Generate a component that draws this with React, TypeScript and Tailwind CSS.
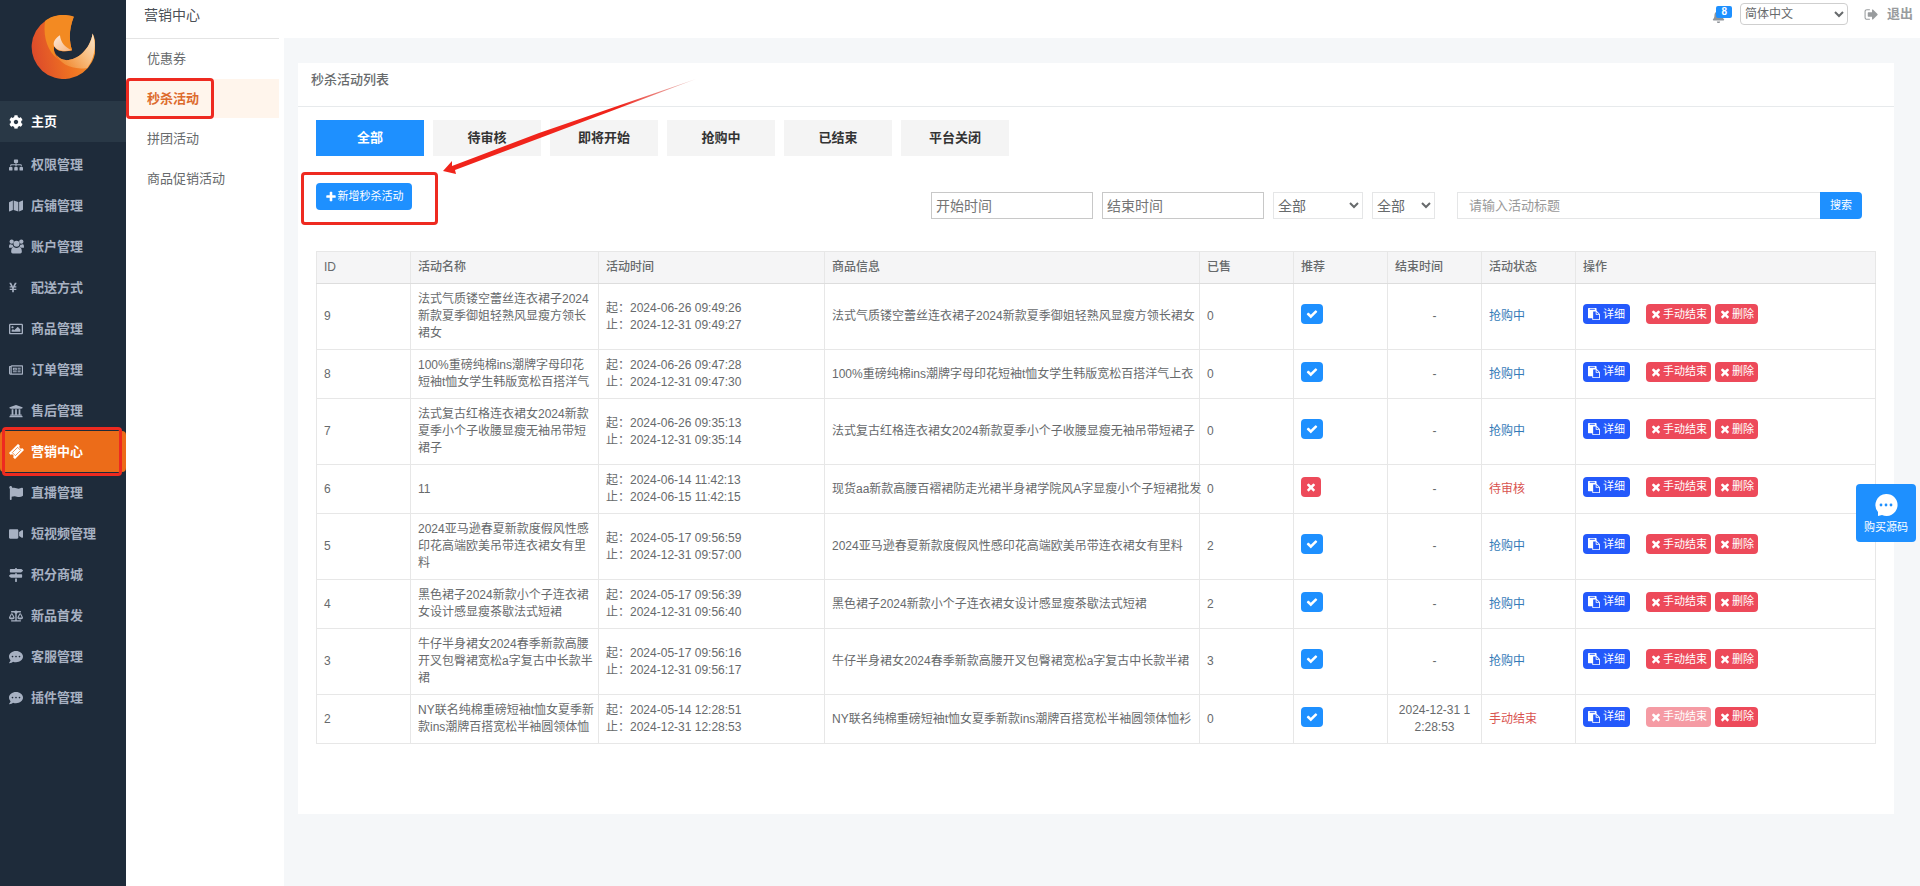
import type { ReactNode } from 'react';
import clsx from 'clsx';
import {
  FaBalanceScale,
  FaBell,
  FaCog,
  FaCommentDots,
  FaFlag,
  FaMap,
  FaMapSigns,
  FaRegImage,
  FaRegNewspaper,
  FaSitemap,
  FaUniversity,
  FaVideo,
  FaYenSign,
} from 'react-icons/fa';

const menu = [
  { label: '主页', icon: <FaCog /> },
  { label: '权限管理', icon: <FaSitemap /> },
  { label: '店铺管理', icon: <FaMap /> },
  { label: '账户管理', icon: <UsersIcon /> },
  { label: '配送方式', icon: <FaYenSign className="h-[11px] w-2" /> },
  { label: '商品管理', icon: <FaRegImage /> },
  { label: '订单管理', icon: <FaRegNewspaper /> },
  { label: '售后管理', icon: <FaUniversity /> },
  { label: '营销中心', icon: <TicketIcon /> },
  { label: '直播管理', icon: <FaFlag /> },
  { label: '短视频管理', icon: <FaVideo /> },
  { label: '积分商城', icon: <FaMapSigns /> },
  { label: '新品首发', icon: <FaBalanceScale /> },
  { label: '客服管理', icon: <FaCommentDots /> },
  { label: '插件管理', icon: <FaCommentDots /> },
];

const subMenu = ['优惠券', '秒杀活动', '拼团活动', '商品促销活动'];

const tabs = ['全部', '待审核', '即将开始', '抢购中', '已结束', '平台关闭'];

const columns = [
  { label: 'ID', width: 'w-[94px]' },
  { label: '活动名称', width: 'w-[188px]' },
  { label: '活动时间', width: 'w-[226px]' },
  { label: '商品信息', width: 'w-[375px]' },
  { label: '已售', width: 'w-[94px]' },
  { label: '推荐', width: 'w-[94px]' },
  { label: '结束时间', width: 'w-[94px]' },
  { label: '活动状态', width: 'w-[94px]' },
  { label: '操作', width: '' },
];

interface Activity {
  id: number;
  name: string;
  start: string;
  end: string;
  product: string;
  sold: number;
  recommended: boolean;
  endedAt: string;
  status: string;
}

const activities: Activity[] = [
  {
    id: 9,
    name: '法式气质镂空蕾丝连衣裙子2024\n新款夏季御姐轻熟风显瘦方领长\n裙女',
    start: '2024-06-26 09:49:26',
    end: '2024-12-31 09:49:27',
    product: '法式气质镂空蕾丝连衣裙子2024新款夏季御姐轻熟风显瘦方领长裙女',
    sold: 0,
    recommended: true,
    endedAt: '-',
    status: '抢购中',
  },
  {
    id: 8,
    name: '100%重磅纯棉ins潮牌字母印花\n短袖t恤女学生韩版宽松百搭洋气',
    start: '2024-06-26 09:47:28',
    end: '2024-12-31 09:47:30',
    product: '100%重磅纯棉ins潮牌字母印花短袖t恤女学生韩版宽松百搭洋气上衣',
    sold: 0,
    recommended: true,
    endedAt: '-',
    status: '抢购中',
  },
  {
    id: 7,
    name: '法式复古红格连衣裙女2024新款\n夏季小个子收腰显瘦无袖吊带短\n裙子',
    start: '2024-06-26 09:35:13',
    end: '2024-12-31 09:35:14',
    product: '法式复古红格连衣裙女2024新款夏季小个子收腰显瘦无袖吊带短裙子',
    sold: 0,
    recommended: true,
    endedAt: '-',
    status: '抢购中',
  },
  {
    id: 6,
    name: '11',
    start: '2024-06-14 11:42:13',
    end: '2024-06-15 11:42:15',
    product: '现货aa新款高腰百褶裙防走光裙半身裙学院风A字显瘦小个子短裙批发',
    sold: 0,
    recommended: false,
    endedAt: '-',
    status: '待审核',
  },
  {
    id: 5,
    name: '2024亚马逊春夏新款度假风性感\n印花高端欧美吊带连衣裙女有里\n料',
    start: '2024-05-17 09:56:59',
    end: '2024-12-31 09:57:00',
    product: '2024亚马逊春夏新款度假风性感印花高端欧美吊带连衣裙女有里料',
    sold: 2,
    recommended: true,
    endedAt: '-',
    status: '抢购中',
  },
  {
    id: 4,
    name: '黑色裙子2024新款小个子连衣裙\n女设计感显瘦茶歇法式短裙',
    start: '2024-05-17 09:56:39',
    end: '2024-12-31 09:56:40',
    product: '黑色裙子2024新款小个子连衣裙女设计感显瘦茶歇法式短裙',
    sold: 2,
    recommended: true,
    endedAt: '-',
    status: '抢购中',
  },
  {
    id: 3,
    name: '牛仔半身裙女2024春季新款高腰\n开叉包臀裙宽松a字复古中长款半\n裙',
    start: '2024-05-17 09:56:16',
    end: '2024-12-31 09:56:17',
    product: '牛仔半身裙女2024春季新款高腰开叉包臀裙宽松a字复古中长款半裙',
    sold: 3,
    recommended: true,
    endedAt: '-',
    status: '抢购中',
  },
  {
    id: 2,
    name: 'NY联名纯棉重磅短袖t恤女夏季新\n款ins潮牌百搭宽松半袖圆领体恤',
    start: '2024-05-14 12:28:51',
    end: '2024-12-31 12:28:53',
    product: 'NY联名纯棉重磅短袖t恤女夏季新款ins潮牌百搭宽松半袖圆领体恤衫',
    sold: 0,
    recommended: true,
    endedAt: '2024-12-31 1\n2:28:53',
    status: '手动结束',
  },
];

const iconPaths = {
  times:
    'M1490 1322q0 40-28 68l-136 136q-28 28-68 28t-68-28l-294-294-294 294q-28 28-68 28t-68-28l-136-136q-28-28-28-68t28-68l294-294-294-294q-28-28-28-68t28-68l136-136q28-28 68-28t68 28l294 294 294-294q28-28 68-28t68 28l136 136q28 28 28 68t-28 68l-294 294 294 294q28 28 28 68z',
  check:
    'M1671 566q0 40-28 68l-724 724-136 136q-28 28-68 28t-68-28l-136-136-362-362q-28-28-28-68t28-68l136-136q28-28 68-28t68 28l294 295 656-657q28-28 68-28t68 28l136 136q28 28 28 68z',
  plus: 'M1600 736v192q0 40-28 68t-68 28h-416v416q0 40-28 68t-68 28h-192q-40 0-68-28t-28-68v-416h-416q-40 0-68-28t-28-68v-192q0-40 28-68t68-28h416v-416q0-40 28-68t68-28h192q40 0 68 28t28 68v416h416q40 0 68 28t28 68z',
  paste:
    'M768 1664h896v-640h-416q-40 0-68-28t-28-68v-416h-384v1152zm256-1440v-64q0-13-9.5-22.5t-22.5-9.5h-704q-13 0-22.5 9.5t-9.5 22.5v64q0 13 9.5 22.5t22.5 9.5h704q13 0 22.5-9.5t9.5-22.5zm256 672h299l-299-299v299zm512 128v672q0 40-28 68t-68 28h-960q-40 0-68-28t-28-68v-160h-544q-40 0-68-28t-28-68v-1344q0-40 28-68t68-28h1088q40 0 68 28t28 68v328q21 13 36 28l408 408q28 28 48 76t20 88z',
  signOut:
    'M704 1440q0 4 1 20t.5 26.5-3 23.5-10 19.5-20.5 6.5h-320q-119 0-203.5-84.5t-84.5-203.5v-704q0-119 84.5-203.5t203.5-84.5h320q13 0 22.5 9.5t9.5 22.5q0 4 1 20t.5 26.5-3 23.5-10 19.5-20.5 6.5h-320q-66 0-113 47t-47 113v704q0 66 47 113t113 47h312l11.5 1 11.5 3 8 5.5 7 9 2 13.5zm928-544q0 26-19 45l-544 544q-19 19-45 19t-45-19-19-45v-288h-448q-26 0-45-19t-19-45v-384q0-26 19-45t45-19h448v-288q0-26 19-45t45-19 45 19l544 544q19 19 19 45z',
};

function Icon({ name, className }: { name: keyof typeof iconPaths; className?: string }) {
  return (
    <svg viewBox="0 0 1792 1792" fill="currentColor" className={clsx('shrink-0', className)} aria-hidden="true">
      <path d={iconPaths[name]} />
    </svg>
  );
}

function UsersIcon() {
  return (
    <svg viewBox="0 0 28 28" fill="currentColor" className="h-[15px] w-[15px]" aria-hidden="true">
      <circle cx="5" cy="5" r="4" />
      <circle cx="23" cy="5" r="4" />
      <circle cx="14" cy="9" r="5.6" />
      <path d="M0 16C0 11 1 9 3 10C5 11 6 10.500 7 10.500Q7 13 9 15Q6 15 5 16.500H2Q0 16.500 0 16ZM28 16C28 11 27 9 25 10C23 11 22 10.500 21 10.500Q21 13 19 15Q22 15 23 16.500H26Q28 16.500 28 16Z" />
      <path d="M4 24C4 18 6 15 9 15Q14 18.500 19 15C22 15 24 18 24 24Q24 27 21 27H7Q4 27 4 24Z" />
    </svg>
  );
}

function TicketIcon() {
  return (
    <svg viewBox="0 0 28 28" className="h-[15px] w-[15px]" aria-hidden="true">
      <g transform="rotate(-45 14 14)">
        <path fill="currentColor" d="M2 6H26V11A3 3 0 0 0 26 17V22H2V17A3 3 0 0 0 2 11Z" />
        <path fill="none" stroke="#ec6c19" strokeWidth="1.300" d="M7 10H21V18H7Z" />
      </g>
    </svg>
  );
}

function Logo() {
  return (
    <svg viewBox="0 0 190 190" className="h-16 w-16" aria-hidden="true">
      <defs>
        <linearGradient id="body" x1="0" y1="0.6" x2="1" y2="0.4">
          <stop offset="0" stopColor="#dc4a2b" />
          <stop offset="0.5" stopColor="#ee6f22" />
          <stop offset="1" stopColor="#f6962a" />
        </linearGradient>
        <linearGradient id="tail" x1="0" y1="0.8" x2="1" y2="0.1">
          <stop offset="0" stopColor="#f08126" />
          <stop offset="0.5" stopColor="#f7b673" />
          <stop offset="1" stopColor="#fbe3c6" />
        </linearGradient>
        <linearGradient id="flame" x1="0" y1="0" x2="1" y2="1">
          <stop offset="0" stopColor="#fdebdc" />
          <stop offset="1" stopColor="#f5b480" />
        </linearGradient>
      </defs>
      <path
        fill="url(#body)"
        d="M127 5A95 95 0 1 0 183 55C176 100 140 134 105 134C80 132 66 114 68 92C78 110 100 110 122 105C112 75 113 40 127 5Z"
      />
      <path fill="#f38a22" d="M127 5C90-6 58 4 42 18C34 70 52 118 92 138C74 128 66 112 68 92C78 110 100 110 122 105C112 75 113 40 127 5Z" />
      <path fill="url(#tail)" d="M183 55C176 100 140 134 105 134C92 133 80 126 74 116C86 146 122 164 167 157C188 130 196 90 183 55Z" />
      <path fill="url(#flame)" d="M86 60C70 70 63 84 70 94C80 108 102 109 121 104C100 96 88 80 86 60Z" />
    </svg>
  );
}

function MarkBox({ className }: { className: string }) {
  return <span className={clsx('pointer-events-none absolute rounded border-3 border-[#ee2a20]', className)} />;
}

function SmallButton({ className, disabled, children }: { className: string; disabled?: boolean; children: ReactNode }) {
  return (
    <button
      type="button"
      disabled={disabled}
      className={clsx('flex h-5 items-center rounded text-[11px] text-white disabled:opacity-55', className)}
    >
      {children}
    </button>
  );
}

function ActivityRow({ item }: { item: Activity }) {
  const cell = 'border border-[#e7e7e7] py-[7px] pl-[7px] pr-0';
  return (
    <tr>
      <td className={cell}>{item.id}</td>
      <td className={clsx(cell, 'whitespace-pre')}>{item.name}</td>
      <td className={cell}>
        <p>起：{item.start}</p>
        <p>止：{item.end}</p>
      </td>
      <td className={clsx(cell, 'whitespace-nowrap')}>{item.product}</td>
      <td className={cell}>{item.sold}</td>
      <td className="border border-[#e7e7e7] pt-[7px] pb-3 pl-[7px]">
        <SmallButton className={item.recommended ? 'bg-[#1e90ff] px-[5px]' : 'bg-[#ed4a5a] px-1'}>
          <Icon name={item.recommended ? 'check' : 'times'} className="h-3 w-3" />
        </SmallButton>
      </td>
      <td className="border border-[#e7e7e7] py-[7px] text-center whitespace-pre">{item.endedAt}</td>
      <td className={clsx(cell, item.status === '抢购中' ? 'text-[#337ab7]' : 'text-[#d9534f]')}>{item.status}</td>
      <td className="border border-[#e7e7e7] pt-[7px] pb-3 pl-[7px]">
        <div className="flex">
          <SmallButton className="gap-[3px] bg-[#2459fb] px-[5px]">
            <Icon name="paste" className="h-3 w-3" />
            详细
          </SmallButton>
          <SmallButton className="ml-4 gap-px bg-[#ed4a5a] px-1" disabled={item.status === '手动结束'}>
            <Icon name="times" className="h-3 w-3" />
            手动结束
          </SmallButton>
          <SmallButton className="ml-1 gap-px bg-[#ed4a5a] px-1">
            <Icon name="times" className="h-3 w-3" />
            删除
          </SmallButton>
        </div>
      </td>
    </tr>
  );
}

export default function App() {
  return (
    <div className="flex min-h-screen bg-white font-['Liberation_Sans','Noto_Sans_CJK_SC',sans-serif] text-[13px] text-[#676a6c]">
      <aside className="w-[126px] shrink-0 bg-[#1e2b3a]">
        <div className="flex h-[101px] justify-center pt-[15px]">
          <Logo />
        </div>
        <nav>
          {menu.map((item) => (
            <a
              key={item.label}
              href="#"
              className={clsx(
                'relative flex h-[41px] items-center pl-[9px] font-semibold',
                item.label === '主页' && 'mb-0.5 bg-[#293846] text-white',
                item.label === '营销中心' && 'rounded-sm bg-[#ec6c19] text-white',
                item.label !== '主页' && item.label !== '营销中心' && 'text-[#a7b1c2]',
              )}
            >
              <span className="flex w-[22px] text-sm">{item.icon}</span>
              {item.label}
              {item.label === '营销中心' && <MarkBox className="-inset-y-1 left-0.5 right-1" />}
            </a>
          ))}
        </nav>
      </aside>

      <div className="flex min-w-0 flex-1 flex-col">
        <header className="flex h-[38px] shrink-0 items-start justify-between">
          <h1 className="h-[39px] w-[153px] border-b border-[#e4e4e4] pl-[18px] text-sm leading-[30px] text-[#4b5056]">
            营销中心
          </h1>
          <div className="flex items-center pt-[3px] pr-[7px]">
            <button type="button" className="relative mr-2 h-[22px] w-5 text-[#8f9499]" aria-label="消息">
              <FaBell className="mt-[5px] h-[13px] w-[13px]" />
              <span className="absolute top-[3px] right-0 h-3 rounded-xs bg-[#1e90ff] px-[5px] text-[10px] leading-3 font-bold text-white">
                8
              </span>
            </button>
            <select aria-label="语言" className="h-[22px] w-[108px] rounded border border-[#cfcfcf] bg-white text-xs">
              <option>简体中文</option>
            </select>
            <a href="#" className="ml-4 flex items-center gap-2 font-semibold text-[#999c9e]">
              <Icon name="signOut" className="h-[15px] w-[15px]" />
              退出
            </a>
          </div>
        </header>

        <div className="flex flex-1">
          <nav className="w-[158px] shrink-0 pt-px pr-[5px]">
            {subMenu.map((label) => (
              <a
                key={label}
                href="#"
                className={clsx(
                  'relative mb-px flex h-[39px] items-center pl-[21px]',
                  label === '秒杀活动' && 'bg-[#fff5ec] font-semibold text-[#dd6b2d]',
                )}
              >
                {label}
                {label === '秒杀活动' && <MarkBox className="-inset-y-px left-0 w-[88px]" />}
              </a>
            ))}
          </nav>

          <main className="min-w-0 flex-1 bg-[#f5f7f9] pt-[25px] pr-[26px] pb-[73px] pl-[14px]">
            <section className="bg-white">
              <h2 className="h-11 border-b border-[#e7eaec] pl-[13px] leading-[34px] font-medium">秒杀活动列表</h2>
              <div className="relative px-[18px] pt-[13px] pb-[70px]">
                <div className="flex gap-[9px]">
                  {tabs.map((tab, i) => (
                    <button
                      key={tab}
                      type="button"
                      className={clsx(
                        'h-9 w-[108px] font-semibold',
                        i === 0 ? 'bg-[#1e90ff] text-white' : 'bg-[#f4f4f4] text-[#333]',
                      )}
                    >
                      {tab}
                    </button>
                  ))}
                </div>

                <div className="mt-[27px] flex items-start justify-between">
                  <div className="relative">
                    <button
                      type="button"
                      className="flex h-[27px] w-24 items-center justify-center gap-px rounded bg-[#1e90ff] text-[11px] text-white"
                    >
                      <Icon name="plus" className="h-3 w-3" />
                      新增秒杀活动
                    </button>
                    <MarkBox className="-top-[11px] -left-[15px] h-[53px] w-[137px]" />
                  </div>
                  <form className="flex gap-[9px] pt-[9px] pr-[14px] text-sm">
                    <input
                      aria-label="开始时间"
                      placeholder="开始时间"
                      className="h-[27px] w-[162px] border border-[#c8c8c8] px-1 placeholder:text-[#757575]"
                    />
                    <input
                      aria-label="结束时间"
                      placeholder="结束时间"
                      className="h-[27px] w-[162px] border border-[#c8c8c8] px-1 placeholder:text-[#757575]"
                    />
                    <select aria-label="活动状态" className="h-[27px] w-[90px] border border-[#e5e6e7] bg-white">
                      <option>全部</option>
                    </select>
                    <select aria-label="推荐" className="h-[27px] w-[63px] border border-[#e5e6e7] bg-white">
                      <option>全部</option>
                    </select>
                    <div className="ml-[13px] flex text-[13px]">
                      <input
                        aria-label="活动标题"
                        placeholder="请输入活动标题"
                        className="h-[27px] w-[363px] border border-r-0 border-[#e5e6e7] px-[11px] placeholder:text-[#999]"
                      />
                      <button type="button" className="h-[27px] w-[42px] rounded-r bg-[#1e90ff] text-[11px] text-white">
                        搜索
                      </button>
                    </div>
                  </form>
                </div>

                <table className="mt-8 w-full table-fixed border-collapse text-xs leading-[17px]">
                  <thead>
                    <tr className="h-8 bg-[#f5f5f6]">
                      {columns.map((col) => (
                        <th
                          key={col.label}
                          className={clsx('border border-b-[#dddddd] border-[#e7e7e7] pl-[7px] text-left font-medium', col.width)}
                        >
                          {col.label}
                        </th>
                      ))}
                    </tr>
                  </thead>
                  <tbody>
                    {activities.map((item) => (
                      <ActivityRow key={item.id} item={item} />
                    ))}
                  </tbody>
                </table>

                <svg viewBox="0 0 256 96" className="pointer-events-none absolute -top-7 left-[144px] h-24 w-64" aria-hidden="true">
                  <defs>
                    <linearGradient id="arrow" x1="0" y1="0" x2="1" y2="0">
                      <stop offset="0.7" stopColor="#f0241b" />
                      <stop offset="1" stopColor="#d98a84" stopOpacity="0.5" />
                    </linearGradient>
                  </defs>
                  <path fill="url(#arrow)" d="M1 92L10 82L10 87L97 54L254 0L98 59L13 91L14 95Z" />
                </svg>
              </div>
            </section>
          </main>
        </div>
      </div>

      <button
        type="button"
        className="fixed top-[484px] right-1 flex h-[58px] w-[60px] flex-col items-center rounded bg-[#1e90ff] pt-[9px] text-[11px] text-white"
      >
        <svg viewBox="0 0 24 24" className="h-6 w-6" aria-hidden="true">
          <path fill="#fff" d="M12 1a11 11 0 1 1-4 21l-4 1v-4A11 11 0 0 1 12 1Z" />
          <g fill="#1e90ff">
            <circle cx="7" cy="12" r="1.4" />
            <circle cx="12" cy="12" r="1.4" />
            <circle cx="17" cy="12" r="1.4" />
          </g>
        </svg>
        <span className="mt-0.5 leading-4">购买源码</span>
      </button>
    </div>
  );
}
